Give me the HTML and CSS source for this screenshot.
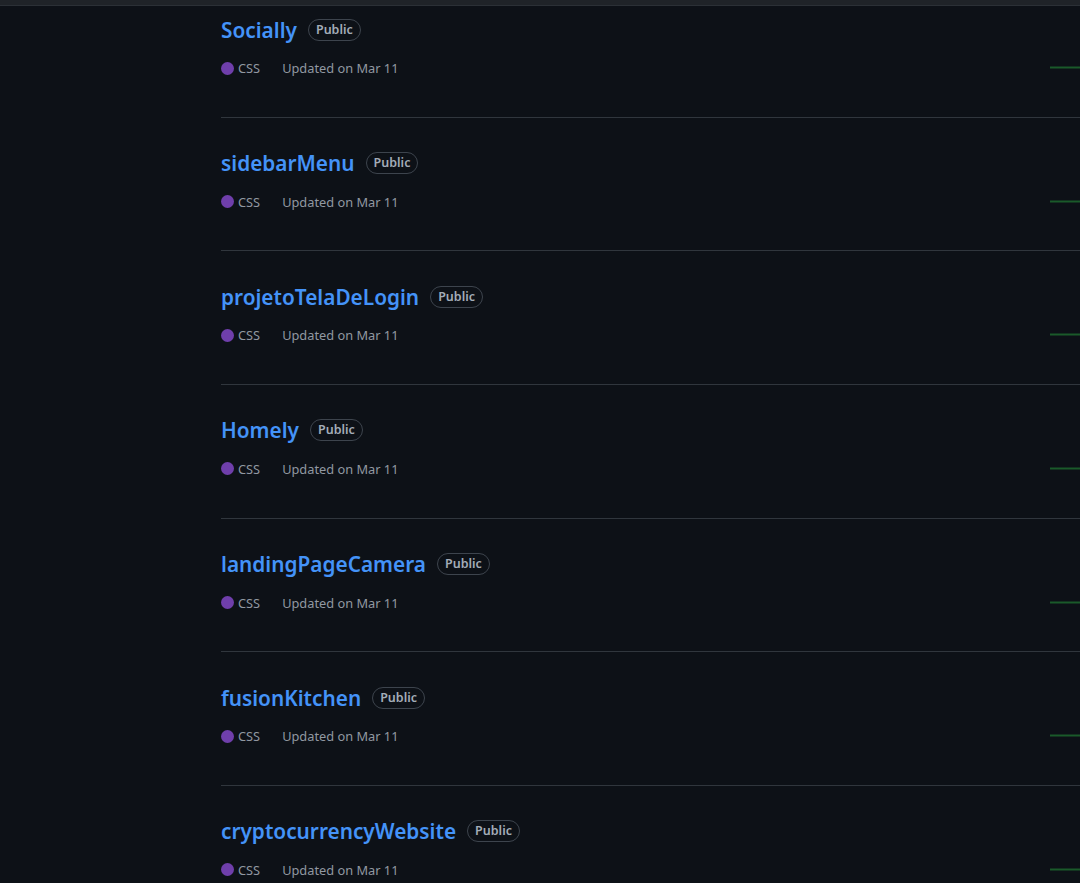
FILE: index.html
```html
<!DOCTYPE html>
<html>
<head>
<meta charset="utf-8">
<link rel="stylesheet" href="styles.css">
</head>
<body>
<div class="topbar"></div>
<main class="list">
  <div class="row">
    <div class="info">
      <div class="title"><a class="name">Socially</a><span class="badge">Public</span></div>
      <div class="meta"><span class="lang"><span class="dot"></span>CSS</span><span class="updated">Updated on Mar 11</span></div>
    </div>
    <div class="spark"><svg width="155" height="3"><line x1="0" y1="1.5" x2="155" y2="1.5"/></svg></div>
  </div>
  <div class="row">
    <div class="info">
      <div class="title"><a class="name">sidebarMenu</a><span class="badge">Public</span></div>
      <div class="meta"><span class="lang"><span class="dot"></span>CSS</span><span class="updated">Updated on Mar 11</span></div>
    </div>
    <div class="spark"><svg width="155" height="3"><line x1="0" y1="1.5" x2="155" y2="1.5"/></svg></div>
  </div>
  <div class="row">
    <div class="info">
      <div class="title"><a class="name">projetoTelaDeLogin</a><span class="badge">Public</span></div>
      <div class="meta"><span class="lang"><span class="dot"></span>CSS</span><span class="updated">Updated on Mar 11</span></div>
    </div>
    <div class="spark"><svg width="155" height="3"><line x1="0" y1="1.5" x2="155" y2="1.5"/></svg></div>
  </div>
  <div class="row">
    <div class="info">
      <div class="title"><a class="name">Homely</a><span class="badge">Public</span></div>
      <div class="meta"><span class="lang"><span class="dot"></span>CSS</span><span class="updated">Updated on Mar 11</span></div>
    </div>
    <div class="spark"><svg width="155" height="3"><line x1="0" y1="1.5" x2="155" y2="1.5"/></svg></div>
  </div>
  <div class="row">
    <div class="info">
      <div class="title"><a class="name">landingPageCamera</a><span class="badge">Public</span></div>
      <div class="meta"><span class="lang"><span class="dot"></span>CSS</span><span class="updated">Updated on Mar 11</span></div>
    </div>
    <div class="spark"><svg width="155" height="3"><line x1="0" y1="1.5" x2="155" y2="1.5"/></svg></div>
  </div>
  <div class="row">
    <div class="info">
      <div class="title"><a class="name">fusionKitchen</a><span class="badge">Public</span></div>
      <div class="meta"><span class="lang"><span class="dot"></span>CSS</span><span class="updated">Updated on Mar 11</span></div>
    </div>
    <div class="spark"><svg width="155" height="3"><line x1="0" y1="1.5" x2="155" y2="1.5"/></svg></div>
  </div>
  <div class="row">
    <div class="info">
      <div class="title"><a class="name">cryptocurrencyWebsite</a><span class="badge">Public</span></div>
      <div class="meta"><span class="lang"><span class="dot"></span>CSS</span><span class="updated">Updated on Mar 11</span></div>
    </div>
    <div class="spark"><svg width="155" height="3"><line x1="0" y1="1.5" x2="155" y2="1.5"/></svg></div>
  </div>
</main>
</body>
</html>
```
FILE: styles.css
```css
html, body {
  margin: 0;
  padding: 0;
  background: #0d1117;
  overflow: hidden;
  height: 883px;
}
body {
  font-family: "Noto Sans", "Open Sans", sans-serif;
  color: #9198a1;
}
.topbar {
  position: fixed;
  top: 0;
  left: 0;
  right: 0;
  height: 5px;
  background: #1f2328;
  border-bottom: 1px solid #2b3036;
  z-index: 2;
}
.list {
  margin-top: -15.8px;
  margin-left: 221px;
  width: 1000px;
}
.row {
  display: grid;
  grid-template-columns: 829px 155px;
  border-bottom: 1px solid #30363d;
  height: 132.6px;
}
.info {
  padding-top: 30.5px;
}
.title {
  display: flex;
  align-items: center;
  height: 30px;
}
.name {
  color: #4493f8;
  font-size: 20.8px;
  font-weight: 600;
  text-decoration: none;
}
.badge {
  margin-left: 11px;
  border: 1px solid #3d444d;
  border-radius: 12px;
  padding: 0 7px;
  height: 20px;
  line-height: 20px;
  font-size: 12.5px;
  font-weight: 600;
  color: #a3acb7;
}
.meta {
  margin-top: 14.5px;
  height: 18px;
  display: flex;
  align-items: center;
  font-size: 12.8px;
}
.lang {
  display: inline-flex;
  align-items: center;
  margin-right: 22px;
}
.dot {
  width: 13px;
  height: 13px;
  border-radius: 50%;
  background: #6f3fab;
  margin-right: 4px;
}
.spark {
  padding-top: 82px;
}
.spark svg {
  display: block;
}
.spark line {
  stroke: #1a5a2a;
  stroke-width: 2;
}
```
